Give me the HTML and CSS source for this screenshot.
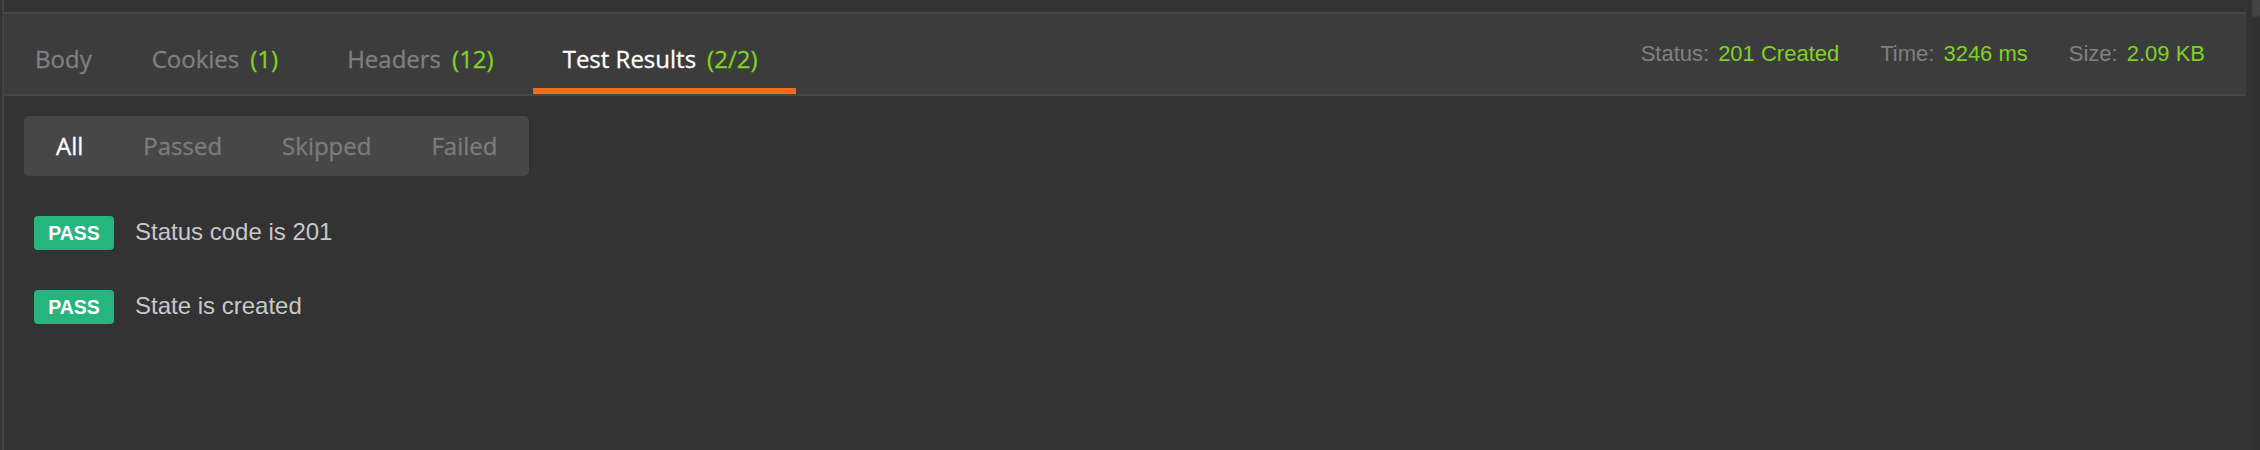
FILE: index.html
```html
<!DOCTYPE html>
<html>
<head>
<meta charset="utf-8">
<link rel="stylesheet" href="styles.css">
</head>
<body>
<div class="window">
  <div class="pane">
    <div class="top-gap"></div>
    <div class="resbar">
      <nav class="tabs">
        <div class="tab">Body</div>
        <div class="tab">Cookies<span class="count">(1)</span></div>
        <div class="tab">Headers<span class="count">(12)</span></div>
        <div class="tab active">Test Results<span class="count">(2/2)</span></div>
      </nav>
      <div class="meta">
        <span class="meta-item"><span class="meta-label">Status:</span><span class="meta-value">201 Created</span></span>
        <span class="meta-item"><span class="meta-label">Time:</span><span class="meta-value">3246 ms</span></span>
        <span class="meta-item"><span class="meta-label">Size:</span><span class="meta-value">2.09 KB</span></span>
      </div>
    </div>
    <div class="results">
      <div class="filter">
        <div class="filter-item active">All</div>
        <div class="filter-item">Passed</div>
        <div class="filter-item">Skipped</div>
        <div class="filter-item">Failed</div>
      </div>
      <ul class="tests">
        <li class="test"><span class="badge">PASS</span><span class="test-name">Status code is 201</span></li>
        <li class="test"><span class="badge">PASS</span><span class="test-name">State is created</span></li>
      </ul>
    </div>
  </div>
  <div class="scroll"><div class="thumb"></div></div>
</div>
</body>
</html>
```

FILE: styles.css
```css
* { box-sizing: border-box; }
html, body {
  margin: 0;
  padding: 0;
  background: #333333;
  width: 2260px;
  height: 450px;
  overflow: hidden;
}
.window {
  display: flex;
  height: 450px;
}
.pane {
  width: 2244px;
  margin-left: 2px;
  border-left: 2px solid #444444;
  display: flex;
  flex-direction: column;
}
.top-gap {
  height: 12px;
}
.resbar {
  display: flex;
  height: 84px;
  background: #3c3c3c;
  border-top: 2px solid #474747;
  border-bottom: 2px solid #474747;
}
.tabs {
  display: flex;
  padding-left: 1px;
}
.tab {
  font-family: "Open Sans", sans-serif;
  font-size: 24px;
  line-height: 32px;
  color: #808080;
  padding: 29px 30px 13px 30px;
  border-bottom: 6px solid transparent;
  white-space: nowrap;
  -webkit-text-stroke: 0.3px currentColor;
}
.tab.active {
  color: #ffffff;
  border-bottom-color: #f26b21;
}
.count {
  color: #7ed321;
  margin-left: 11px;
  margin-right: 9px;
}
.meta {
  margin-left: auto;
  padding: 27px 41px 0 0;
  font-family: "Liberation Sans", Arial, sans-serif;
  font-size: 22px;
  line-height: 26px;
  display: flex;
  white-space: nowrap;
}
.meta-item {
  margin-left: 41px;
}
.meta-label {
  color: #808080;
  margin-right: 9px;
}
.meta-value {
  color: #7ed321;
}
.results {
  padding: 20px 0 0 20px;
}
.filter {
  display: inline-flex;
  background: #474747;
  border-radius: 5px;
  padding: 0 2px;
  height: 60px;
}
.filter-item {
  font-family: "Open Sans", sans-serif;
  font-size: 24px;
  line-height: 60px;
  color: #7c7c7c;
  padding: 0 30px;
  -webkit-text-stroke: 0.3px currentColor;
}
.filter-item.active {
  color: #ffffff;
}
.tests {
  list-style: none;
  margin: 40px 0 0 0;
  padding: 0 0 0 10px;
  display: flex;
  flex-direction: column;
  gap: 40px;
}
.test {
  display: flex;
  align-items: baseline;
  height: 34px;
}
.badge {
  display: inline-block;
  width: 80px;
  height: 34px;
  line-height: 34px;
  text-align: center;
  background: #26b47f;
  border-radius: 4px;
  color: #ffffff;
  font-family: "Liberation Sans", Arial, sans-serif;
  font-weight: bold;
  font-size: 19.5px;
}
.test-name {
  margin-left: 21px;
  font-family: "Liberation Sans", Arial, sans-serif;
  font-size: 24px;
  color: #c8c8c8;
}
.scroll {
  margin-left: 6px;
  width: 8px;
  background: #313131;
}
.thumb {
  height: 17px;
  background: #444444;
  border-radius: 0 0 4px 4px;
}
```
